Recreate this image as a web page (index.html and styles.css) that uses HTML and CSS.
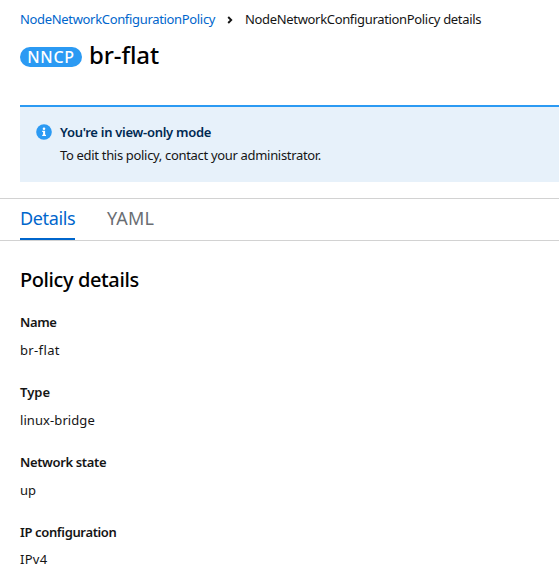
FILE: index.html
```html
<!DOCTYPE html>
<html lang="en">
<head>
<meta charset="utf-8">
<title>br-flat</title>
<link rel="stylesheet" href="styles.css">
</head>
<body>
<header class="page-header">
  <nav class="breadcrumb">
    <a class="crumb-link" href="#">NodeNetworkConfigurationPolicy</a>
    <svg class="crumb-arrow" viewBox="0 0 6 8"><path d="M1.200 1l3 3-3 3" fill="none" stroke="currentColor" stroke-width="1.900"/></svg>
    <span class="crumb-current">NodeNetworkConfigurationPolicy details</span>
  </nav>
  <div class="title-row">
    <span class="badge">NNCP</span>
    <h1 class="title">br-flat</h1>
  </div>
</header>
<section class="alert">
  <svg class="alert-icon" viewBox="0 0 16 16"><circle cx="8" cy="8" r="7.800" fill="#2b9af3"/><path d="M6.200 6.700h2.900v4h.9V12H6.200v-1.300h.9V8h-.9z" fill="#fff"/><circle cx="8" cy="4.800" r="1.300" fill="#fff"/></svg>
  <div class="alert-body">
    <h2 class="alert-title">You're in view-only mode</h2>
    <p class="alert-text">To edit this policy, contact your administrator.</p>
  </div>
</section>
<nav class="tabs">
  <a class="tab tab-active" href="#">Details</a>
  <a class="tab" href="#">YAML</a>
</nav>
<main class="details">
  <h2 class="section-title">Policy details</h2>
  <dl class="fields">
    <div class="field"><dt class="label">Name</dt><dd class="value value-name">br-flat</dd></div>
    <div class="field"><dt class="label label-type">Type</dt><dd class="value">linux-bridge</dd></div>
    <div class="field"><dt class="label">Network state</dt><dd class="value">up</dd></div>
    <div class="field field-compact"><dt class="label">IP configuration</dt><dd class="value value-ip">IPv4</dd></div>
  </dl>
</main>
</body>
</html>
```
FILE: styles.css
```css
* { box-sizing: border-box; }
html { overflow: hidden; }
body {
  margin: 0;
  background: #fff;
  color: #151515;
  font-family: "Noto Sans", sans-serif;
  font-size: 13px;
  line-height: 20px;
}
h1, h2, p, dl, dt, dd { margin: 0; }
a { text-decoration: none; }
.page-header { height: 105px; padding: 9px 0 0 20px; white-space: nowrap; }
.breadcrumb { display: flex; align-items: center; height: 20px; }
.crumb-link { width: 195px; color: #0066cc; letter-spacing: -0.33px; }
.crumb-arrow { width: 6px; height: 8px; margin: 1px 12px 0 12px; }
.crumb-current { letter-spacing: -0.33px; }
.title-row { display: flex; align-items: center; gap: 7px; height: 32px; margin-top: 10px; }
.badge {
  display: flex; align-items: center; justify-content: center;
  width: 62px; height: 20px; margin-top: 4px; border-radius: 10px;
  background: #2b9af3; color: #fff; font-size: 16px; font-weight: 500; letter-spacing: 0.7px;
}
.title { color: #000; font-size: 24px; font-weight: 500; line-height: 32px; letter-spacing: -0.1px; }
.alert {
  display: flex; gap: 8px; height: 77px; margin-left: 20px; padding: 15px 16px;
  border-top: 2px solid #2b9af3; background: #e7f1fa;
}
.alert-icon { width: 16px; height: 16px; margin-top: 2px; }
.alert-title { color: #002952; font-size: 13px; font-weight: 600; line-height: 20px; letter-spacing: -0.28px; }
.alert-text { margin-top: 3px; letter-spacing: -0.32px; }
.tabs {
  display: flex; gap: 32px; height: 43px; margin-top: 16px; padding-left: 20px;
  border-top: 1px solid #d2d2d2; border-bottom: 1px solid #d2d2d2;
}
.tab { height: 41px; color: #6a6e73; font-size: 18px; line-height: 39px; letter-spacing: 0.2px; }
.tab-active { width: 55px; border-bottom: 2px solid #0066cc; color: #0066cc; letter-spacing: -0.35px; }
.details { padding: 24px 0 0 20px; }
.section-title { color: #000; font-size: 20px; font-weight: 500; line-height: 30px; letter-spacing: -0.4px; }
.fields { padding-top: 17px; }
.field { height: 70px; }
.label { font-weight: 600; line-height: 20px; letter-spacing: -0.36px; }
.label-type { letter-spacing: 0; }
.value { margin-top: 8px; letter-spacing: 0.08px; }
.value-name { letter-spacing: 0.35px; }
.value-ip { letter-spacing: 0.3px; }
.field-compact { height: 48px; }
.field-compact .value { margin-top: 7px; }
```
